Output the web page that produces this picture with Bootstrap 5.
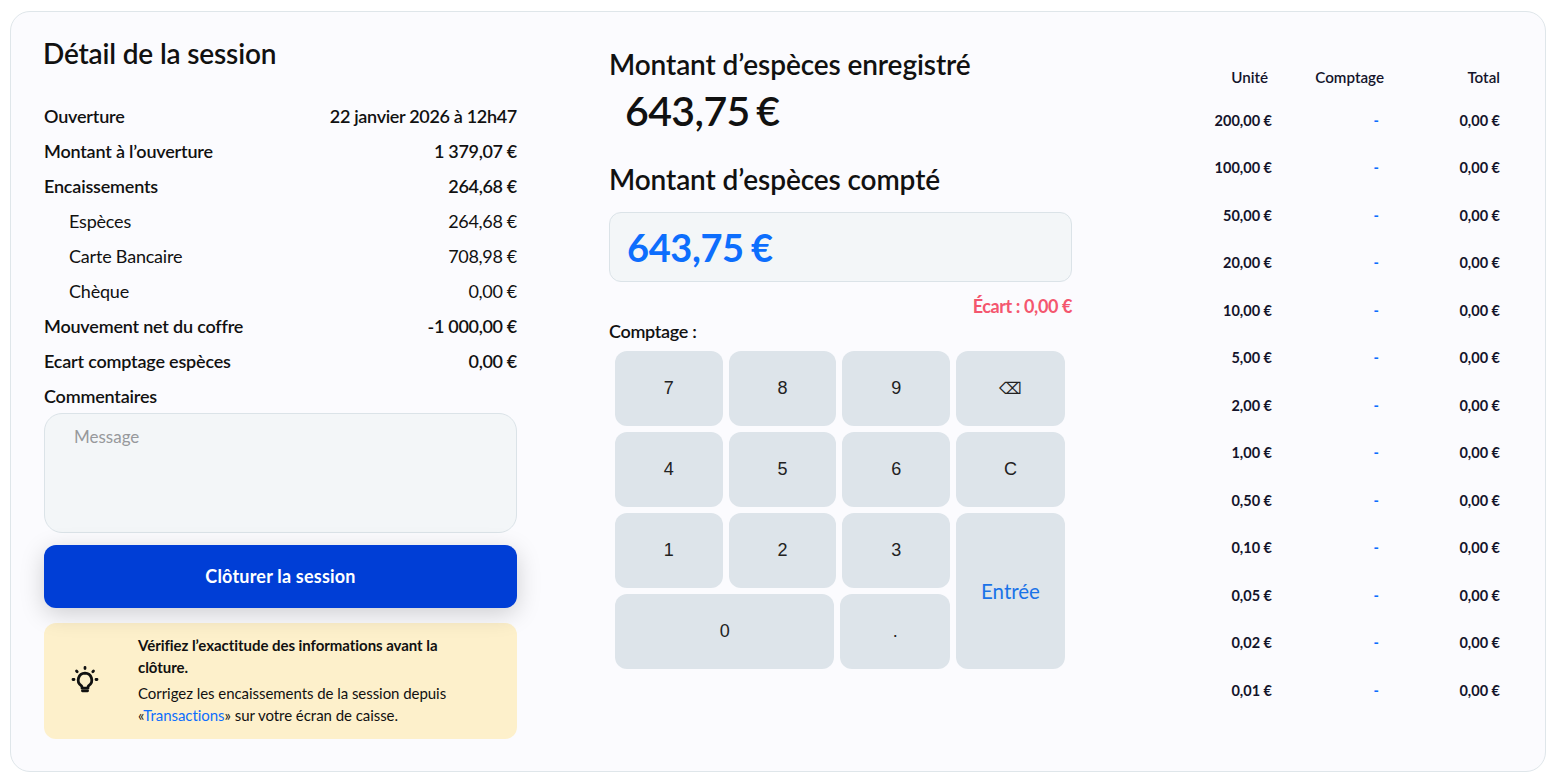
<!DOCTYPE html>
<html lang="fr">
<head>
  <meta charset="UTF-8">
  <title>Détail de la session</title>
  <link href="https://cdn.jsdelivr.net/npm/bootstrap@5.3.3/dist/css/bootstrap.min.css" rel="stylesheet">
  <style>
    body { font-family: Lato, sans-serif; background: #fff; color: #111; height: 783px; overflow: hidden; padding: 11px 14px 0 10px; }
    .session-panel { height: 761px; background: #fbfbfe; border: 1px solid #dfe6ea; border-radius: 20px; padding: 20px 45px 0 33px; gap: 92px; }

    .left-col { width: 473px; flex: none; }
    .left-col h1 { font-size: 28px; font-weight: 600; line-height: 42px; letter-spacing: -.16px; margin: 0 0 25px -1px; }
    .info-row { height: 35px; font-size: 18px; font-weight: 600; letter-spacing: -.2px; }
    .info-row.sub { font-weight: 400; padding-left: 25px; }
    .info-row .amount { letter-spacing: -.32px; }
    .msg-input.form-control { height: 120px; margin-top: -1px; background: #f3f6f8; border: 1px solid #dbe3e8; border-radius: 18px; padding: 10px 29px; font-size: 17px; resize: none; }
    .msg-input::placeholder { color: #97999c; }
    .close-btn.btn { height: 63px; margin-top: 12px; background: #003ed6; border: 0; border-radius: 12px; color: #fff; font-size: 18px; font-weight: 700; letter-spacing: .2px; box-shadow: 0 6px 24px rgba(0,0,0,.18); }
    .hint-box { height: 116px; margin-top: 15px; background: #fdf0cb; border-radius: 12px; padding: 0 40px 2px 26px; font-size: 15px; line-height: 22px; letter-spacing: -.05px; }
    .hint-box svg { width: 32px; height: 32px; flex: none; margin-right: 37px; margin-left: -1px; }
    .hint-box p { margin: 0 0 4px; }
    .hint-box a { color: #0d6efd; text-decoration: none; }

    .mid-col { width: 463px; flex: none; padding-top: 14px; }
    .mid-col h2 { font-size: 28px; font-weight: 600; line-height: 36px; letter-spacing: -.1px; margin: 0; }
    .cash-total { font-size: 41px; font-weight: 600; line-height: 58px; padding-left: 16px; margin-bottom: 21px; letter-spacing: -.6px; word-spacing: -3px; }
    .cash-count { height: 70px; margin-top: 15px; background: #f3f6f8; border: 1px solid #dbe3e8; border-radius: 12px; padding-left: 17px; color: #0d6efd; font-size: 38px; font-weight: 700; letter-spacing: -.4px; word-spacing: -1.5px; }
    .gap-note { color: #f4566e; font-size: 18px; font-weight: 700; letter-spacing: -.4px; line-height: 24px; margin-top: 12px; }
    .count-label { font-size: 18px; font-weight: 600; letter-spacing: -.3px; line-height: 26px; }
    .keypad { width: 450px; margin: 7px 0 0 6px; gap: 6px; }
    .key-left { width: 335px; gap: 6px; }
    .key-row { gap: 6px; }
    .key-right { width: 109px; gap: 6px; }
    .key.btn { flex: 1 1 0; height: 75px; padding: 0; background: #dde4ea; border: 0; border-radius: 12px; color: #222; font-family: "Liberation Sans", sans-serif; font-size: 18px; }
    .key.wide { flex: 2 1 0; }
    .key-right .key { flex: none; }
    .key.erase { font-size: 16px; }
    .key.enter { flex: 1 1 0; color: #1a73e8; font-family: Lato, sans-serif; font-size: 20.5px; }

    .cash-col { flex: 1; padding-top: 25px; }
    .cash-grid { width: 100%; table-layout: fixed; font-size: 14.5px; font-weight: 700; color: #14142b; }
    .cash-grid th { font-weight: 600; font-size: 15.2px; height: 40px; text-align: right; padding: 0; }
    .cash-grid td { height: 47.5px; text-align: right; padding: 0; }
    .cash-grid .unit-col { width: 108px; }
    .cash-grid .count-col { width: 112px; }
    .cash-grid th.unit-col { padding-right: 4px; }
    .cash-grid td.count-col { color: #0d6efd; padding-right: 5px; }
  </style>
</head>
<body>
<div class="session-panel d-flex">

  <div class="left-col">
    <h1>Détail de la session</h1>
    <div class="info-row d-flex justify-content-between align-items-center"><span>Ouverture</span><span class="amount">22 janvier 2026 à 12h47</span></div>
    <div class="info-row d-flex justify-content-between align-items-center"><span>Montant à l’ouverture</span><span class="amount">1 379,07 €</span></div>
    <div class="info-row d-flex justify-content-between align-items-center"><span>Encaissements</span><span class="amount">264,68 €</span></div>
    <div class="info-row sub d-flex justify-content-between align-items-center"><span>Espèces</span><span class="amount">264,68 €</span></div>
    <div class="info-row sub d-flex justify-content-between align-items-center"><span>Carte Bancaire</span><span class="amount">708,98 €</span></div>
    <div class="info-row sub d-flex justify-content-between align-items-center"><span>Chèque</span><span class="amount">0,00 €</span></div>
    <div class="info-row d-flex justify-content-between align-items-center"><span>Mouvement net du coffre</span><span class="amount">-1 000,00 €</span></div>
    <div class="info-row d-flex justify-content-between align-items-center"><span>Ecart comptage espèces</span><span class="amount">0,00 €</span></div>
    <div class="info-row d-flex align-items-center"><span>Commentaires</span></div>
    <textarea class="msg-input form-control" placeholder="Message"></textarea>
    <button class="close-btn btn w-100" type="button">Clôturer la session</button>
    <div class="hint-box d-flex align-items-center">
      <svg viewBox="0 0 32 32" fill="none" stroke="#111" stroke-width="2.8" stroke-linecap="round" stroke-linejoin="round">
        <path d="M16 9.200a6.800 6.800 0 0 0-3.800 12.400c.5.400.8.900.8 1.500v1.100h6v-1.100c0-.6.300-1.100.8-1.500A6.800 6.800 0 0 0 16 9.200z"/>
        <path d="M13.400 26.800h5.200"/>
        <path d="M16 3.500v1M7.500 7l.7.7M24.500 7l-.7.7M4 15.500h1M27 15.500h1"/>
      </svg>
      <div>
        <p class="fw-bold">Vérifiez l’exactitude des informations avant la clôture.</p>
        <p class="mb-0">Corrigez les encaissements de la session depuis<br>«<a href="#">Transactions</a>» sur votre écran de caisse.</p>
      </div>
    </div>
  </div>

  <div class="mid-col">
    <h2>Montant d’espèces enregistré</h2>
    <div class="cash-total">643,75 €</div>
    <h2>Montant d’espèces compté</h2>
    <div class="cash-count d-flex align-items-center">643,75 €</div>
    <div class="gap-note text-end">Écart : 0,00 €</div>
    <div class="count-label">Comptage :</div>
    <div class="keypad d-flex">
      <div class="key-left d-flex flex-column">
        <div class="key-row d-flex"><button class="key btn">7</button><button class="key btn">8</button><button class="key btn">9</button></div>
        <div class="key-row d-flex"><button class="key btn">4</button><button class="key btn">5</button><button class="key btn">6</button></div>
        <div class="key-row d-flex"><button class="key btn">1</button><button class="key btn">2</button><button class="key btn">3</button></div>
        <div class="key-row d-flex"><button class="key wide btn">0</button><button class="key btn">.</button></div>
      </div>
      <div class="key-right d-flex flex-column">
        <button class="key erase btn">⌫</button>
        <button class="key btn">C</button>
        <button class="key enter btn">Entrée</button>
      </div>
    </div>
  </div>

  <div class="cash-col">
    <table class="cash-grid">
      <thead><tr><th class="unit-col">Unité</th><th class="count-col">Comptage</th><th>Total</th></tr></thead>
      <tbody id="cash-rows"></tbody>
    </table>
  </div>
</div>

<script>
const units = ["200,00", "100,00", "50,00", "20,00", "10,00", "5,00", "2,00", "1,00", "0,50", "0,10", "0,05", "0,02", "0,01"];
document.getElementById("cash-rows").innerHTML = units.map(u =>
  `<tr><td class="unit-col">${u} €</td><td class="count-col">-</td><td>0,00 €</td></tr>`
).join("");
</script>
<script src="https://cdn.jsdelivr.net/npm/bootstrap@5.3.3/dist/js/bootstrap.bundle.min.js"></script>
</body>
</html>
